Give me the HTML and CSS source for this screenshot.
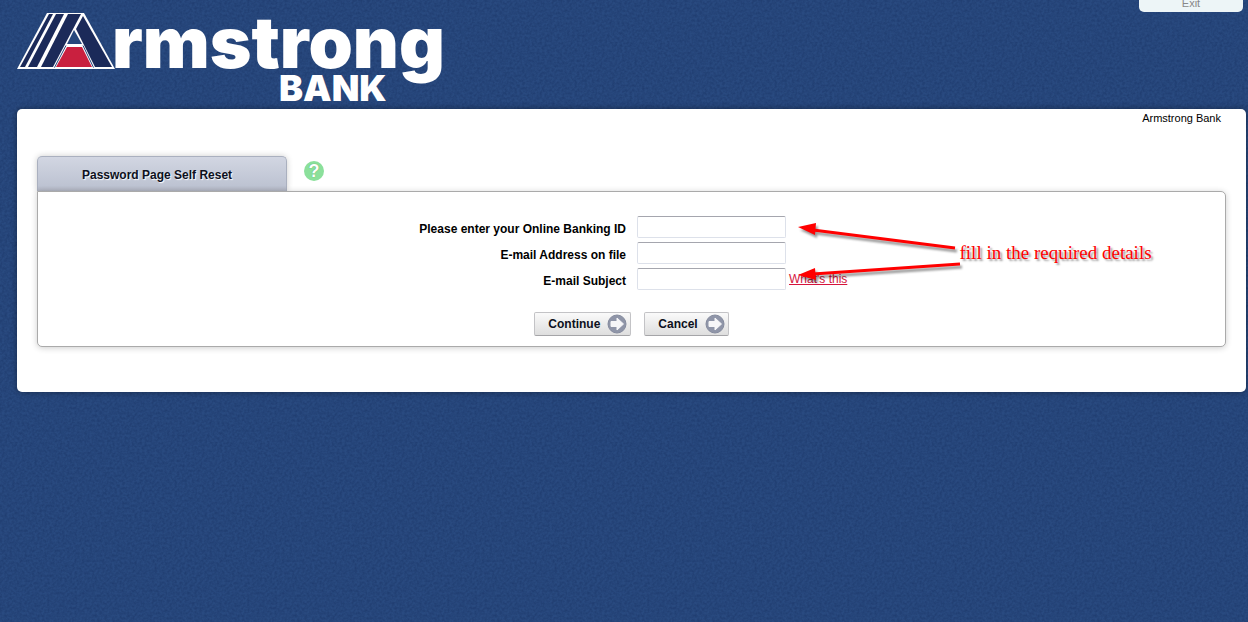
FILE: index.html
```html
<!DOCTYPE html>
<html lang="en">
<head>
  <meta charset="UTF-8">
  <meta name="viewport" content="width=device-width, initial-scale=1.0">
  <title>Armstrong Bank - Password Self Reset</title>
  <link rel="stylesheet" href="styles.css">
</head>
<body>
  <header class="header">
    <!-- Logo -->
    <div class="logo">
      <svg class="logo-mark" viewBox="0 0 98 58" width="98" height="58" aria-hidden="true">
        <polygon points="0,57 30,1 67,1 98,57" fill="#fff"/>
        <polygon points="3,55 32,2 36,2 8,55" fill="#1b2a59"/>
        <polygon points="11,55 39,2 47,2 20,55" fill="#1b2a59"/>
        <polygon points="24,55 51,2 64,2 36,55" fill="#1b2a59"/>
        <polygon points="66,4 95,55 78,55 59,17" fill="#1b2a59"/>
        <polygon points="57,18 65,32 50,32" fill="#26477c"/>
        <polygon points="50,35 65,35 75,55 39,55" fill="#c9203f"/>
        <path d="M37.500 55.500L49 33.500M76.500 55.500L66 33.500" stroke="#26477c" stroke-width="1" fill="none"/>
      </svg>
      <div class="logo-text">
        <span class="logo-name">rmstrong</span>
        <span class="logo-bank">BANK</span>
      </div>
    </div>
    <a class="exit" href="#">Exit</a>
  </header>

  <main class="content">
    <p class="bank-name">Armstrong Bank</p>

    <div class="tab-row">
      <h1 class="tab">Password Page Self Reset</h1>
      <button class="help" type="button" aria-label="Help">?</button>
    </div>

    <form class="panel">
      <div class="row">
        <label for="bankingId">Please enter your Online Banking ID</label>
        <div class="field"><input type="text" id="bankingId"></div>
      </div>
      <div class="row">
        <label for="email">E-mail Address on file</label>
        <div class="field"><input type="text" id="email"></div>
      </div>
      <div class="row">
        <label for="subject">E-mail Subject</label>
        <div class="field"><input type="text" id="subject"><a class="whats-this" href="#">What's this</a></div>
      </div>

      <div class="actions">
        <button class="btn" type="submit">Continue
          <svg viewBox="0 0 20 20" width="20" height="20" aria-hidden="true">
            <circle cx="10" cy="10" r="9" fill="#8f95a8" stroke="#858b9e"/>
            <path d="M4 7.500H10V4L16.500 10 10 16V12.500H4z" fill="#f6f6f8" stroke="#f6f6f8"/>
          </svg>
        </button>
        <button class="btn" type="button">Cancel
          <svg viewBox="0 0 20 20" width="20" height="20" aria-hidden="true">
            <circle cx="10" cy="10" r="9" fill="#8f95a8" stroke="#858b9e"/>
            <path d="M4 7.500H10V4L16.500 10 10 16V12.500H4z" fill="#f6f6f8" stroke="#f6f6f8"/>
          </svg>
        </button>
      </div>

      <!-- Callout over the form -->
      <div class="callout">
        <svg class="arrows" viewBox="0 0 166 64" width="166" height="64" aria-hidden="true">
          <g stroke="#f00" stroke-width="3">
            <path d="M16 9L158 27"/>
            <path d="M16 53L163 43"/>
          </g>
          <path d="M1 6L19 2L18 14Z" fill="#f00"/>
          <path d="M1 54L18 47L19 59Z" fill="#f00"/>
        </svg>
        <span class="callout-text">fill in the required details</span>
      </div>
    </form>
  </main>
</body>
</html>
```
FILE: styles.css
```css
* {
  box-sizing: border-box;
}
body {
  margin: 0;
  min-height: 100vh;
  font-family: "Liberation Sans", Arial, sans-serif;
  font-size: 12px;
  color: #000;
  background-color: #294a80;
  /* cloth grain */
  background-image: url("data:image/svg+xml,%3Csvg xmlns='http://www.w3.org/2000/svg' width='200' height='200'%3E%3Cfilter id='n' x='0' y='0' width='1' height='1' color-interpolation-filters='sRGB'%3E%3CfeTurbulence type='fractalNoise' baseFrequency='0.4' numOctaves='2' stitchTiles='stitch'/%3E%3CfeColorMatrix values='0 0 0 0 0.04 0 0 0 0 0.12 0 0 0 0 0.3 0.5 0 0 0 -0.14'/%3E%3C/filter%3E%3Crect width='200' height='200' filter='url(%23n)'/%3E%3C/svg%3E");
}

/* Header */
.header {
  display: flex;
  justify-content: space-between;
  align-items: flex-start;
  height: 109px;
  padding: 0 5px 0 17px;
}
.logo {
  display: flex;
  align-items: flex-start;
  padding-top: 12px;
}
.logo-text {
  display: flex;
  flex-direction: column;
  margin-left: -3px;
  color: #fff;
  font-family: Inter, "Open Sans", sans-serif;
  font-weight: 900;
}
.logo-name {
  font-size: 71px;
  line-height: 60px;
}
.logo-bank {
  padding-left: 167px;
  font-size: 36px;
  line-height: 32px;
}
.exit {
  width: 104px;
  padding-bottom: 6px;
  border-radius: 0 0 5px 5px;
  background: #edf5f7;
  color: #888;
  font-size: 11px;
  line-height: 6px;
  text-align: center;
  text-decoration: none;
}

/* White content area */
.content {
  margin: 0 2px 0 17px;
  padding: 0 20px 45px;
  border-radius: 5px;
  background: #fff;
  box-shadow: 0 0 6px rgba(0, 0, 0, 0.4);
}
.bank-name {
  margin: 0;
  padding: 3px 5px 0 0;
  font-size: 11px;
  line-height: 12px;
  text-align: right;
}
.tab-row {
  display: flex;
  align-items: flex-start;
  gap: 17px;
  padding-top: 32px;
}
.tab {
  width: 250px;
  margin: 0;
  padding: 2px 0 0 44px;
  border: 1px solid #aab0bf;
  border-bottom: 0;
  border-radius: 5px 5px 0 0;
  background: linear-gradient(#d2d6e2, #bdc3d2 85%, #b0b4c1);
  box-shadow: 0 0 6px rgba(0, 0, 0, 0.2);
  color: #0d1020;
  font-size: 12px;
  line-height: 32px;
  text-shadow: 1px 1px 1px #fff;
}
.help {
  width: 20px;
  height: 20px;
  margin-top: 5px;
  padding: 0;
  border: 0;
  border-radius: 50%;
  background: #8be09b;
  color: #fff;
  font: bold 18px/20px "Liberation Sans", Arial, sans-serif;
  text-shadow: 0 0 1px #4c9c5c;
}

/* Form */
.panel {
  position: relative;
  padding: 24px 0 10px;
  border: 1px solid #aaa;
  border-radius: 0 5px 5px 5px;
  background: #fff;
  box-shadow: 0 1px 6px rgba(0, 0, 0, 0.2);
}
.row {
  display: grid;
  grid-template-columns: 1fr 1fr;
  column-gap: 11px;
  margin-bottom: 4px;
}
.row label {
  padding-top: 4px;
  font-weight: bold;
  line-height: 18px;
  text-align: right;
}
.field {
  display: flex;
  align-items: center;
  gap: 3px;
}
.field input {
  width: 149px;
  height: 22px;
  padding: 2px 4px;
  border: 1px solid #dde1ea;
  border-top-color: #a5a6ae;
  border-radius: 2px;
  background: #fff;
}
.whats-this {
  color: #d5143c;
}
.actions {
  display: flex;
  justify-content: center;
  gap: 13px;
  padding-top: 18px;
}
.btn {
  display: flex;
  align-items: center;
  gap: 7px;
  height: 24px;
  padding: 0 3px 0 13px;
  border: 1px solid #c3c3c6;
  border-bottom-color: #a5a5a8;
  border-radius: 2px;
  background: linear-gradient(#fafafa, #dedede);
  color: #0d1020;
  font: bold 12px "Liberation Sans", Arial, sans-serif;
}

/* Callout */
.callout {
  position: absolute;
  top: 29px;
  left: 50%;
  display: flex;
  align-items: center;
  margin-left: 165px;
  color: #f00;
  pointer-events: none;
}
.arrows {
  fill: none;
  filter: drop-shadow(2px 3px 1px rgba(0, 0, 0, 0.4));
}
.callout-text {
  margin-left: -3px;
  font-family: "Liberation Serif", "Times New Roman", serif;
  font-size: 19px;
  text-shadow: 2px 2px 2px rgba(0, 0, 0, 0.4);
  white-space: nowrap;
}
```
